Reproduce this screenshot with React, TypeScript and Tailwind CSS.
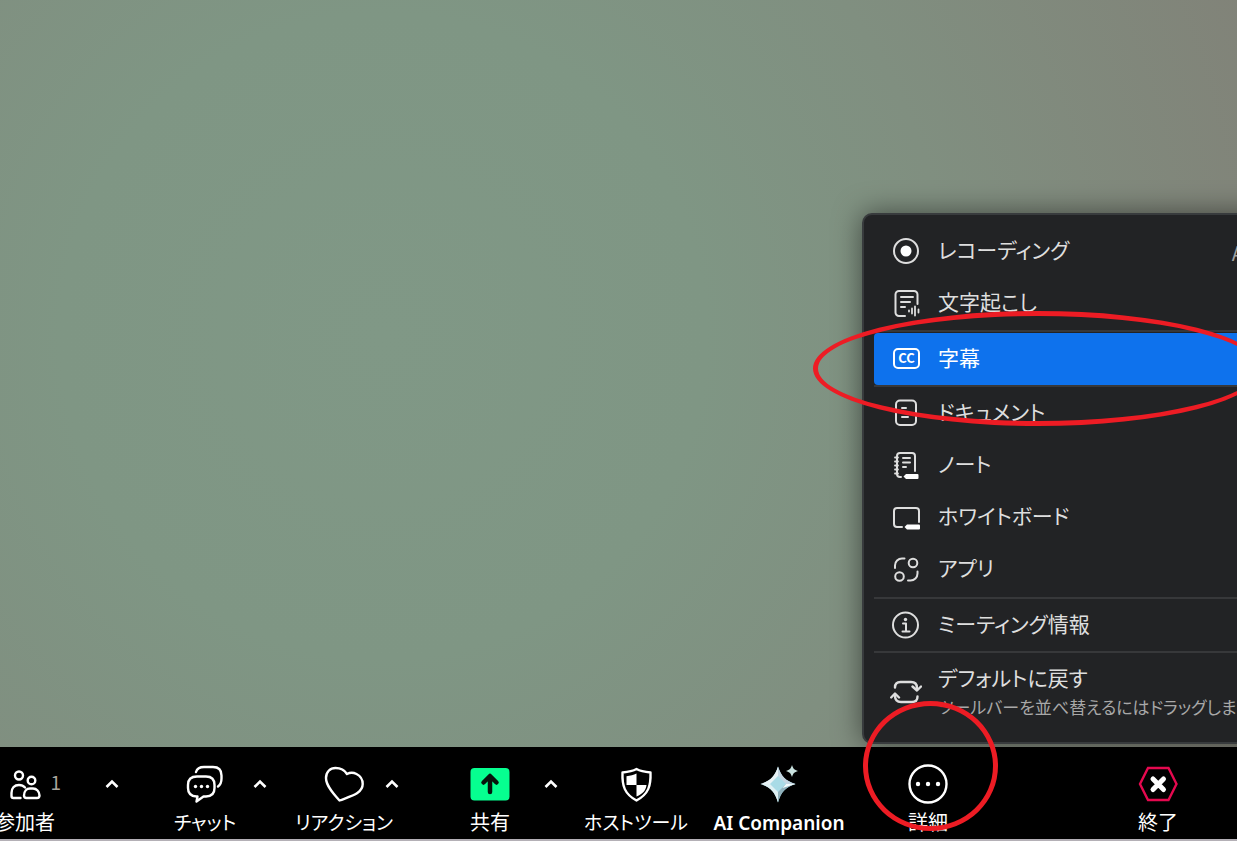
import type { ReactNode } from "react";

interface MenuItem {
  label: string;
  icon: ReactNode;
  shortcut?: string;
  active?: boolean;
}

function MenuIcon({ children }: { children: ReactNode }) {
  return (
    <svg
      className="size-8 shrink-0"
      viewBox="0 0 32 32"
      fill="none"
      stroke="currentColor"
      strokeWidth="2"
      strokeLinecap="round"
      strokeLinejoin="round"
      aria-hidden="true"
    >
      {children}
    </svg>
  );
}

function BarIcon({ children }: { children: ReactNode }) {
  return (
    <svg
      className="size-10 shrink-0"
      viewBox="0 0 40 40"
      fill="none"
      stroke="currentColor"
      strokeWidth="2.4"
      strokeLinecap="round"
      strokeLinejoin="round"
      aria-hidden="true"
    >
      {children}
    </svg>
  );
}

const topItems: MenuItem[] = [
  {
    label: "レコーディング",
    shortcut: "Alt+R",
    icon: (
      <MenuIcon>
        <circle cx="16" cy="16" r="12" />
        <circle cx="16" cy="16" r="5.500" fill="#ffffff" stroke="none" />
      </MenuIcon>
    ),
  },
  {
    label: "文字起こし",
    icon: (
      <MenuIcon>
        <path d="M15 29H9a3.5 3.5 0 0 1-3.500-3.500V7.500A3.500 3.500 0 0 1 9 4h15a3.500 3.500 0 0 1 3.500 3.500V17" />
        <path d="M11 10h12M11 15h9M11 20h4" />
        <path d="M19 23.500v1M22 21.500v5M25 19.500v9M28.500 22.500v3" strokeWidth="1.800" />
      </MenuIcon>
    ),
  },
];

const captionItem: MenuItem = {
  label: "字幕",
  active: true,
  icon: (
    <MenuIcon>
      <rect x="4" y="6" width="25" height="19" rx="4" />
      <text
        x="16.500"
        y="20"
        textAnchor="middle"
        fontSize="13"
        fontWeight="700"
        fill="currentColor"
        stroke="none"
      >
        CC
      </text>
    </MenuIcon>
  ),
};

const toolItems: MenuItem[] = [
  {
    label: "ドキュメント",
    icon: (
      <MenuIcon>
        <rect x="6" y="3.500" width="20" height="24.500" rx="4" />
        <path d="M12 11h4M12 20h6" />
      </MenuIcon>
    ),
  },
  {
    label: "ノート",
    icon: (
      <MenuIcon>
        <path d="M11 28h-1a3 3 0 0 1-3-3V7a3 3 0 0 1 3-3h12a3 3 0 0 1 3 3v15" />
        <path d="M13 9h7M13 13.500h7M13 18h3" />
        <path d="M5 8.500h3M5 12.500h3M5 16.500h3M5 20.500h3M5 24.500h3" strokeWidth="1.800" />
        <path d="M16 25h11.500a1 1 0 0 1 1 1v3a1 1 0 0 1-1 1H16l-2.500-2.500z" fill="#ffffff" stroke="none" />
      </MenuIcon>
    ),
  },
  {
    label: "ホワイトボード",
    icon: (
      <MenuIcon>
        <path d="M12 26H7a3 3 0 0 1-3-3V10a3 3 0 0 1 3-3h19a3 3 0 0 1 3 3v11" />
        <path d="M17 23.500h12a1 1 0 0 1 1 1v3a1 1 0 0 1-1 1H17L14.500 26z" fill="#ffffff" stroke="none" />
      </MenuIcon>
    ),
  },
  {
    label: "アプリ",
    icon: (
      <MenuIcon>
        <circle cx="23" cy="10" r="4.300" />
        <circle cx="9.500" cy="23.500" r="4.300" />
        <path d="M5 15V12.500A7 7 0 0 1 12 5.500H14.500M27.500 18.500V20.500A7 7 0 0 1 20.500 27.500H18" />
      </MenuIcon>
    ),
  },
];

const infoItem: MenuItem = {
  label: "ミーティング情報",
  icon: (
    <MenuIcon>
      <circle cx="15.500" cy="16" r="12.500" />
      <circle cx="15.500" cy="10.500" r="1.700" fill="currentColor" stroke="none" />
      <path d="M13 14.500h3V22M12.500 22.500h7" />
    </MenuIcon>
  ),
};

function MenuRow({ item }: { item: MenuItem }) {
  return (
    <button
      type="button"
      role="menuitem"
      className={`flex h-[52px] w-full items-center gap-4 rounded pl-4 pr-6 text-left text-[21px] leading-8 ${
        item.active ? "bg-[#0e72ed] text-white" : "text-[#dedede]"
      }`}
    >
      {item.icon}
      <span className="flex-1 whitespace-nowrap pb-1">{item.label}</span>
      {item.shortcut && <span className="pt-1 text-xl text-[#a0a0a0]">{item.shortcut}</span>}
    </button>
  );
}

function Divider() {
  return <div role="separator" className="h-0.5 bg-[#37383a]" />;
}

function MoreMenu() {
  return (
    <div
      role="menu"
      aria-label="詳細"
      className="absolute -right-[80px] bottom-[3px] w-[455px] rounded-[10px] border-2 border-[#383b3d] bg-[#222325] px-2.5 pt-2.5 shadow-[0_0_28px_rgba(0,0,0,0.5)]"
    >
      {topItems.map((item) => (
        <MenuRow key={item.label} item={item} />
      ))}
      <div className="py-px">
        <Divider />
      </div>
      <MenuRow item={captionItem} />
      <Divider />
      {toolItems.map((item) => (
        <MenuRow key={item.label} item={item} />
      ))}
      <div className="pt-0.5">
        <Divider />
      </div>
      <MenuRow item={infoItem} />
      <Divider />
      <button
        type="button"
        role="menuitem"
        className="flex h-[89px] w-full items-start gap-4 pl-4 pt-2.5 text-left text-[#dedede]"
      >
        <span className="pt-3">
          <MenuIcon>
            <g strokeWidth="2.400">
              <path d="M5 12.500C5 9 7 7 10.500 7H21c4 0 6 2 6 6v1.500" />
              <path d="M22.500 11.500l4.500 4 4-4" />
              <path d="M27.500 21.500c0 3.500-2 5.500-5.500 5.500H11c-4 0-6-2-6-6v-1" />
              <path d="M1.200 22.500l3.800-4 4 4" />
            </g>
          </MenuIcon>
        </span>
        <span className="flex flex-col whitespace-nowrap">
          <span className="text-[21px] leading-7">デフォルトに戻す</span>
          <span className="text-[17px] leading-8 text-[#a8a8a8]">
            ツールバーを並べ替えるにはドラッグします
          </span>
        </span>
      </button>
    </div>
  );
}

interface BarButtonProps {
  label: string;
  icon: ReactNode;
  className: string;
  labelClassName?: string;
  badge?: string;
}

function BarButton({ label, icon, className, labelClassName = "text-[19px]", badge }: BarButtonProps) {
  return (
    <button type="button" className={`relative flex shrink-0 flex-col items-center gap-1 ${className}`}>
      {icon}
      {badge && <span className="absolute right-1 top-1 text-[19px] leading-7 text-[#a9a49c]">{badge}</span>}
      <span className={`whitespace-nowrap leading-7 ${labelClassName}`}>{label}</span>
    </button>
  );
}

function Caret({ label, className }: { label: string; className: string }) {
  return (
    <button type="button" aria-label={label} className={`flex h-10 w-4 shrink-0 items-center justify-center ${className}`}>
      <svg className="size-4" viewBox="0 0 16 16" fill="none" stroke="currentColor" strokeWidth="2.600" aria-hidden="true">
        <path d="M2.500 11L8 5.500l5.500 5.500" />
      </svg>
    </button>
  );
}

function Toolbar() {
  return (
    <footer className="flex h-[94px] items-start overflow-hidden border-b-2 border-[#b4b0b6] bg-black pt-[17px] text-white">
      <BarButton
        label="参加者"
        badge="1"
        className="-ml-[15px] w-20"
        labelClassName="text-xl"
        icon={
          <BarIcon>
            <g strokeWidth="2.400">
              <circle cx="14" cy="11.500" r="4" />
              <circle cx="26.500" cy="16.500" r="3.800" />
              <path d="M15.500 34H8.500a2 2 0 0 1-2-2v-3c0-5 3-8 7.500-8 2.500 0 4.500.8 6 2.500" />
              <path d="M21.500 34a2.500 2.500 0 0 1-2.500-2.500c0-4 2.500-7 6-7h3c3.500 0 6.500 3 6.500 7a2.500 2.500 0 0 1-2.500 2.500z" />
            </g>
          </BarIcon>
        }
      />
      <Caret label="参加者オプション" className="ml-[39px]" />
      <BarButton
        label="チャット"
        className="ml-[45px] w-20"
        icon={
          <BarIcon>
            <path d="M12 12.500h9q8.500 0 8.500 8.500v3q0 8.500-8.500 8.500h-2.500l-7 5 1-5h-1Q3 32 3 24v-3q0-8.500 9-8.500z" />
            <path d="M11 8q1.500-5 8-5h9q8.500 0 8.500 8.500v3q0 5.500-3.500 8" />
            <g fill="currentColor" stroke="none">
              <circle cx="10.500" cy="22.500" r="1.700" />
              <circle cx="16.500" cy="22.500" r="1.700" />
              <circle cx="22.500" cy="22.500" r="1.700" />
            </g>
          </BarIcon>
        }
      />
      <Caret label="チャットオプション" className="ml-[7px]" />
      <BarButton
        label="リアクション"
        className="ml-9 w-20"
        icon={
          <BarIcon>
            <path d="M15.500 36.500C10 30.500 2 22 2 14 2 8 6 4 11.500 4c5 0 9 2 11.500 6 3-1.500 6.500-1.500 9.500 0 4 2 6.200 5.500 6.200 10C38.700 29.500 27 32 15.500 36.500z" />
          </BarIcon>
        }
      />
      <Caret label="リアクションオプション" className="" />
      <BarButton
        label="共有"
        className="ml-[50px] w-20"
        labelClassName="text-xl"
        icon={
          <BarIcon>
            <rect x="0.500" y="4" width="39" height="32.500" rx="4" fill="#06ff90" stroke="none" />
            <path d="M20 28V13M13.500 18.500l6.500-6.500 6.500 6.500" stroke="#07130c" strokeWidth="4.500" />
          </BarIcon>
        }
      />
      <Caret label="共有オプション" className="ml-[13px]" />
      <BarButton
        label="ホストツール"
        className="ml-[27px] w-[100px]"
        icon={
          <BarIcon>
            <path d="M20.500 5C17 7 12 8 6.500 8.500 6 22 8.500 30 20.500 36.500 32.500 30 35 22 34.500 8.500 29 8 24 7 20.500 5z" />
            <path
              d="M20.500 9.500C17.500 11 14.500 11.800 10.500 12.200V21h10zM20.500 21h10C30 26 27 30 20.500 32.500z"
              fill="currentColor"
              stroke="none"
            />
          </BarIcon>
        }
      />
      <BarButton
        label="AI Companion"
        className="ml-7 w-[130px]"
        labelClassName="pt-px font-['Noto_Sans'] text-[19px] font-semibold"
        icon={
          <svg className="size-10 shrink-0" viewBox="0 0 40 40" aria-hidden="true">
            <path d="M19 2.500c3 9.500 7.500 14.500 17.500 17.500C26.500 23 22 28 19 38.500 16 28 11.500 23 1.500 20 11.500 17 16 12 19 2.500z" fill="#a9dbe6" />
            <path d="M19 2.500V12l-8 8H1.500C11.500 17 16 12 19 2.500z" fill="#eaf3f6" />
            <path d="M19 2.500c3 9.500 7.500 14.500 17.500 17.500H27l-8-8z" fill="#c4d6e2" />
            <path d="M36.500 20C26.500 23 22 28 19 38.500V28l8-8z" fill="#8fb0bb" />
            <path d="M1.500 20H11l8 8v10.500C16 28 11.500 23 1.500 20z" fill="#dff0f3" />
            <path d="M27 20l9.500 0-13 4z" fill="#f2fbfc" />
            <path d="M33 1c1.200 3.800 2.200 4.800 6 6-3.800 1.200-4.800 2.200-6 6-1.200-3.800-2.200-4.800-6-6 3.800-1.200 4.800-2.200 6-6z" fill="#c9e2df" />
          </svg>
        }
      />
      <BarButton
        label="詳細"
        className="ml-11 w-20"
        labelClassName="text-xl"
        icon={
          <BarIcon>
            <circle cx="20" cy="20" r="18.500" />
            <g fill="currentColor" stroke="none">
              <circle cx="10" cy="20" r="2.200" />
              <circle cx="20" cy="20" r="2.200" />
              <circle cx="30" cy="20" r="2.200" />
            </g>
          </BarIcon>
        }
      />
      <BarButton
        label="終了"
        className="ml-auto mr-[39px] w-20"
        labelClassName="text-xl"
        icon={
          <BarIcon>
            <path d="M10 4h20.500L38.500 20 30.500 36H10L2 20z" stroke="#e5094f" strokeLinejoin="miter" />
            <path d="M15 15l10.500 10.500M25.500 15L15 25.500" strokeWidth="5" />
          </BarIcon>
        }
      />
    </footer>
  );
}

export default function App() {
  return (
    <div className="relative flex min-h-screen flex-col overflow-hidden font-['Noto_Sans_CJK_JP',sans-serif] font-normal [font-feature-settings:'palt']">
      <main className="relative flex-1 bg-[radial-gradient(circle_at_31%_45%,#809886_0%,#7f9684_34%,#808f80_60%,#818278_100%)]">
        <MoreMenu />
      </main>
      <Toolbar />
      {/* hand-drawn marks around the captions row and the more button */}
      <div className="pointer-events-none absolute left-[813px] top-[311px] h-[115px] w-[450px] rounded-[50%] border-[5px] border-[#ed1c24]" />
      <div className="pointer-events-none absolute left-[863px] top-[701px] h-[130px] w-[135px] rounded-[50%] border-[5px] border-[#ed1c24]" />
    </div>
  );
}
